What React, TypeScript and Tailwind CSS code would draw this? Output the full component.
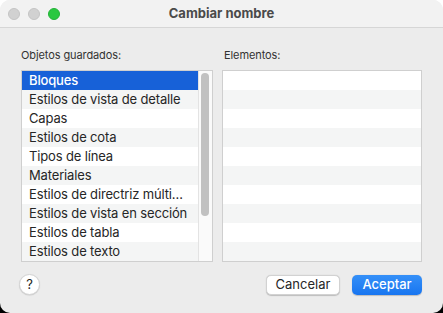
const objetos = [
  "Bloques",
  "Estilos de vista de detalle",
  "Capas",
  "Estilos de cota",
  "Tipos de línea",
  "Materiales",
  "Estilos de directriz múlti…",
  "Estilos de vista en sección",
  "Estilos de tabla",
  "Estilos de texto",
];

const App = () => {
  return (
    <div className="w-[443px] h-[313px] bg-[linear-gradient(#fff_50%,#000_50%)] font-['Inter','Noto_Sans',sans-serif] text-[#262626]">
      <div className="w-full h-full rounded-[10px] overflow-hidden bg-[#ececec] flex flex-col">
        {/* barra de título */}
        <div className="relative h-[28px] shrink-0 bg-[#f2f2f2] border-b border-[#d6d6d6] flex items-center justify-center">
          <div className="absolute left-[8px] top-[8px] flex gap-[8px]">
            <span className="w-[12px] h-[12px] rounded-full bg-[#d1d1d1] border border-[#c4c4c4]" />
            <span className="w-[12px] h-[12px] rounded-full bg-[#d1d1d1] border border-[#c4c4c4]" />
            <span className="w-[12px] h-[12px] rounded-full bg-[#2ac840] border border-[#24b238]" />
          </div>
          <span className="text-[13px] font-bold text-[#4a4a4a]">Cambiar nombre</span>
        </div>

        <div className="flex-1 px-[21px] pt-[20px] flex flex-col">
          <div className="flex gap-[9px]">
            <div className="w-[192px] flex flex-col">
              <p className="text-[11px] leading-[14px] h-[22px] tracking-[-0.1px] text-[#333]">Objetos guardados:</p>
              <div className="h-[192px] bg-white border border-[#cfcfcf] flex">
                <div className="flex-1 min-w-0 flex flex-col">
                  {objetos.map((o, i) => (
                    <div
                      key={o}
                      className={`h-[19px] shrink-0 pl-[7px] pr-[4px] text-[13px] leading-[19px] tracking-[-0.15px] truncate ${
                        i === 0
                          ? "bg-[#1761d8] text-white font-medium"
                          : i % 2 === 1
                          ? "bg-[#f4f5f5]"
                          : "bg-white"
                      }`}
                    >
                      {o}
                    </div>
                  ))}
                </div>
                <div className="w-[14px] shrink-0 border-l border-[#e3e3e3] bg-[#fafafa] px-[2px] pt-[2px]">
                  <div className="h-[143px] w-[8px] rounded-full bg-[#c1c1c1]" />
                </div>
              </div>
            </div>

            <div className="w-[200px] flex flex-col">
              <p className="text-[11px] leading-[14px] h-[22px] pl-[2px] tracking-[-0.1px] text-[#333]">Elementos:</p>
              <div className="h-[192px] bg-white border border-[#cfcfcf] flex flex-col">
                {objetos.map((o, i) => (
                  <div key={o} className={`h-[19px] shrink-0 ${i % 2 === 1 ? "bg-[#f4f5f5]" : "bg-white"}`} />
                ))}
              </div>
            </div>
          </div>

          <div className="mt-[12px] flex items-center">
            <button className="w-[21px] h-[21px] -ml-[2px] rounded-full bg-white border border-[#d4d4d4] shadow-[0_0.5px_1px_rgba(0,0,0,0.15)] text-[13px] leading-none flex items-center justify-center text-[#222]">
              ?
            </button>
            <div className="ml-auto flex gap-[12px]">
              <button className="w-[74px] h-[20px] rounded-[5px] bg-white border border-[#d2d2d2] shadow-[0_0.5px_1px_rgba(0,0,0,0.2)] text-[13px] leading-none text-[#262626]">
                Cancelar
              </button>
              <button className="w-[70px] h-[20px] rounded-[5px] bg-[linear-gradient(#3590f8,#1875f0)] text-[13px] leading-none font-medium text-white shadow-[0_0.5px_1px_rgba(0,0,0,0.2)]">
                Aceptar
              </button>
            </div>
          </div>
        </div>
      </div>
    </div>
  );
};

export default App;
